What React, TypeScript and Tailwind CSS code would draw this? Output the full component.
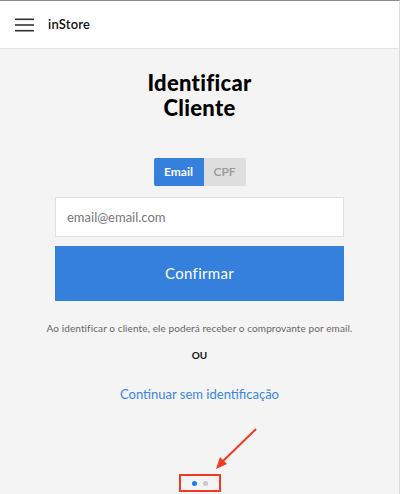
import { useState } from "react";

export default function App() {
  const [mode, setMode] = useState<"email" | "cpf">("email");

  return (
    <div
      className="w-[400px] h-[494px] bg-[#f4f4f4] border-t border-t-[#8a8a8a] border-r border-r-[#dcdcdc] flex flex-col overflow-hidden relative"
      style={{ fontFamily: "Lato, 'Noto Sans', sans-serif" }}
    >
      {/* Header */}
      <header className="h-[48px] bg-white border-b border-[#e2e2e2] flex items-center px-[15px] gap-[14px] shrink-0">
        <svg width="19" height="14" viewBox="0 0 19 14" className="text-[#333]">
          <rect x="0" y="0.5" width="19" height="1.6" fill="currentColor" />
          <rect x="0" y="6.2" width="19" height="1.6" fill="currentColor" />
          <rect x="0" y="11.9" width="19" height="1.6" fill="currentColor" />
        </svg>
        <span className="text-[13px] text-[#111] font-semibold tracking-[0.2px]">inStore</span>
      </header>

      {/* Content */}
      <main className="flex flex-col items-center flex-1">
        <h1 className="mt-[21px] text-[22px] leading-[25px] font-black text-black text-center tracking-[0.3px]">
          Identificar
          <br />
          Cliente
        </h1>

        <div className="mt-[38px] flex h-[28px] rounded-[2px] overflow-hidden">
          <button
            onClick={() => setMode("email")}
            className={`w-[50px] text-[12px] font-bold ${mode === "email" ? "bg-[#3580dd] text-white" : "bg-[#dedede] text-[#999]"}`}
          >
            Email
          </button>
          <button
            onClick={() => setMode("cpf")}
            className={`w-[42px] text-[12px] font-semibold ${mode === "cpf" ? "bg-[#3580dd] text-white" : "bg-[#dedede] text-[#999]"}`}
          >
            CPF
          </button>
        </div>

        <input
          type="text"
          placeholder={mode === "email" ? "email@email.com" : "000.000.000-00"}
          className="mt-[11px] w-[289px] h-[40px] bg-white border border-[#e0e0e0] px-[11px] text-[13px] text-[#333] placeholder:text-[#777] outline-none"
        />

        <button className="mt-[9px] w-[289px] h-[55px] bg-[#3580dd] text-white text-[15px] tracking-[0.3px]">
          Confirmar
        </button>

        <p className="mt-[20px] text-[10px] text-[#666] text-center tracking-[0.1px]">
          Ao identificar o cliente, ele poderá receber o comprovante por email.
        </p>
        <p className="mt-[12px] text-[10px] font-bold text-[#111]">OU</p>

        <a className="mt-[22px] text-[13px] text-[#3a86e0] cursor-pointer">
          Continuar sem identificação
        </a>

        <div className="mt-auto mb-[2px] w-[42px] h-[18px] border-2 border-[#f03a24] flex items-center justify-center gap-[6px]">
          <span className="w-[5px] h-[5px] rounded-full bg-[#1a7ef0]" />
          <span className="w-[5px] h-[5px] rounded-full bg-[#c8c8c8]" />
        </div>
      </main>

      {/* annotation arrow */}
      <svg className="absolute left-[212px] top-[424px]" width="48" height="48" viewBox="0 0 48 48">
        <line x1="44" y1="4" x2="9" y2="38" stroke="#f03a24" strokeWidth="2" />
        <polygon points="4,44 8,32 15,39" fill="#f03a24" />
      </svg>
    </div>
  );
}
